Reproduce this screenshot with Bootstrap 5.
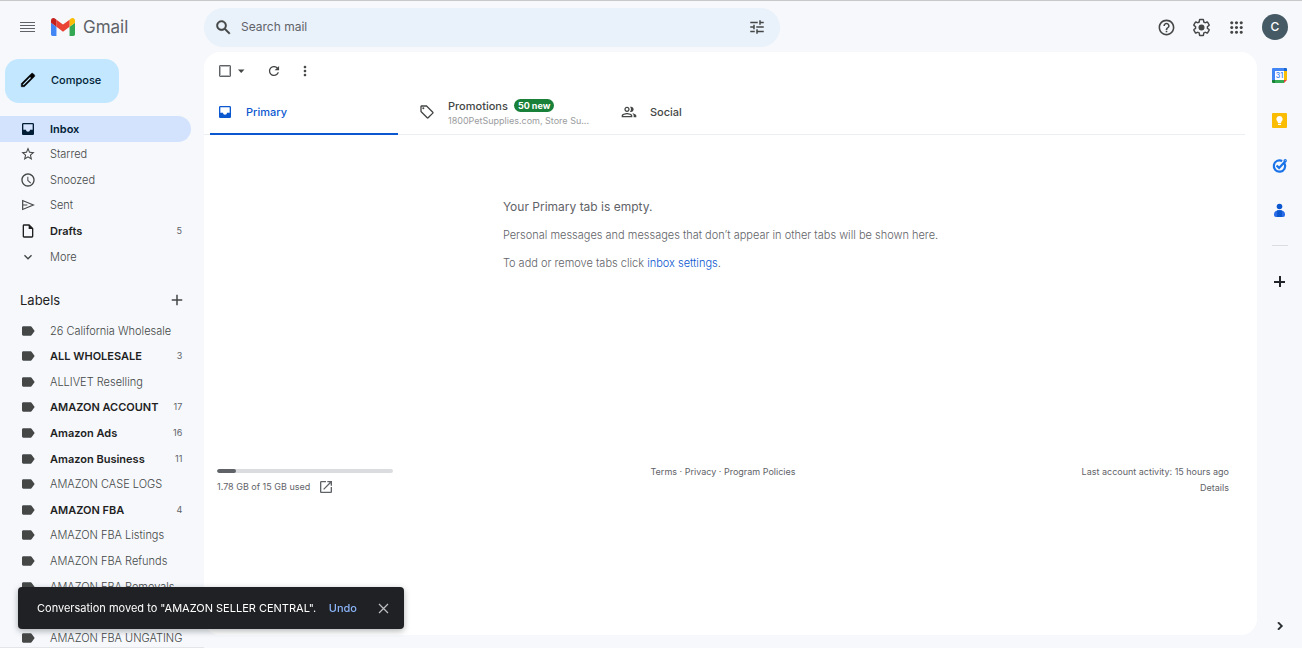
<!DOCTYPE html>
<html lang="en">
<head>
<meta charset="utf-8">
<meta name="viewport" content="width=device-width, initial-scale=1">
<title>Inbox - Gmail</title>
<link rel="stylesheet" href="https://cdn.jsdelivr.net/npm/bootstrap@5.3.0/dist/css/bootstrap.min.css">
<style>
  body { font-family: Inter, Roboto, sans-serif; font-size: 11px; line-height: 16px; color: #444746; background: #f6f8fc; border-top: 1px solid #c9c9c9; }
  a { text-decoration: none; color: inherit; }
  svg { display: block; flex: none; }
  svg:not([fill]) { fill: currentColor; }
  .icon-btn { padding: 0; border: 0; background: none; color: #444746; }
  .topbar { height: 53px; margin-bottom: -2px; }
  .brand-zone, .sidebar { width: 204px; flex: none; }
  .brand-name { font-size: 17px; line-height: 24px; color: #5f6368; }
  .search-box { flex: 0 1 576px; height: 39px; background: #e9f1fb; padding: 0 14px 0 10px; }
  .search-box input { font-size: 12px; line-height: 20px; background: none; border: 0; outline: 0; color: #444746; }
  .search-box input::placeholder { color: #5f6368; }
  .avatar { width: 26px; height: 26px; background: #455a64; color: #fff; font-size: 12px; font-weight: 500; }
  .account-tools { padding-right: 14px; }

  .sidebar { padding-top: 7px; border-bottom: 1px solid #e3e5e8; }
  .compose { height: 44px; margin-left: 5px; padding: 0 18px 2px 14px; gap: 14px; border: 0; border-radius: 14px; background: #c2e7ff; color: #001d35; font-weight: 500; font-size: 11px; }
  .compose svg { color: #000; }
  .folders { display: grid; grid-auto-rows: 26px 25px 26px 25px 26px; margin: 13px 13px 0 0; }
  .folders a { display: flex; align-items: center; height: 100%; padding: 0 9px 0 20px; border-radius: 0 13px 13px 0; font-weight: 300; white-space: nowrap; }
  .folders svg { margin-right: 14px; }
  .folders .count { margin-left: auto; font-size: 9px; font-weight: 400; color: #5f6368; }
  .folders .unread { font-weight: 600; color: #1f1f1f; }
  .folders .active { background: #d3e3fd; color: #001d35; font-weight: 600; }
  .labels-head { margin: 18px 18px 0 20px; }
  .labels-head h2 { font-size: 13px; line-height: 24px; font-weight: 400; color: #1f1f1f; margin: 0; }
  .label-list { margin-top: 6px; }

  .mail-pane { background: #fff; border-radius: 16px; margin-bottom: 13px; padding-right: 12px; }
  .toolbar-row { height: 38px; padding-left: 15px; }
  .select-all { appearance: none; width: 12px; height: 12px; border: 1px solid #5f6368; outline: 1px solid #b4b6b8; outline-offset: -2px; border-radius: 1px; margin: 0; }
  .inbox-tabs { height: 45px; border-bottom: 1px solid #eceff1; }
  .inbox-tabs .tab { position: relative; width: 202px; padding: 0 12px 0 13px; gap: 13px; font-weight: 500; line-height: 16px; color: #444746; }
  .inbox-tabs .tab.active { color: #0b57d0; }
  .inbox-tabs .tab.active::after { content: ""; position: absolute; left: 6px; right: 8px; bottom: -1px; height: 2px; background: #0b57d0; }
  .tab-text { padding-top: 2px; }
  .new-badge { background: #188038; color: #fff; font-size: 9px; line-height: 13px; font-weight: 700; border-radius: 7px; padding: 0 4px; margin-left: 6px; }
  .senders { font-size: 9px; line-height: 14px; font-weight: 400; color: #9a9c9e; }
  .empty-note { margin-top: 62px; color: #5f6368; font-weight: 300; }
  .empty-note p { margin: 0 0 12px; }
  .empty-note .lead-line { font-size: 12px; line-height: 20px; font-weight: 400; margin-bottom: 10px; }
  .empty-note a { color: #0b57d0; }
  .pane-foot { margin-top: 181px; font-size: 9px; color: #5f6368; }
  .storage { width: 176px; height: 4px; margin: 5px 0 6px; border-radius: 2px; background: #dadce0; }
  .storage .progress-bar { background: #5f6368; border-radius: 2px; }
  .storage-zone { padding-left: 13px; }

  .side-apps { width: 45px; flex: none; padding: 15px 0 14px; }
  .app-gap { margin-top: 28px; }
  .side-apps hr { width: 16px; margin: 26px 0 27px; border-color: #8d9188; }
  .toast-bar { position: fixed; left: 18px; bottom: 19px; width: 386px; height: 42px; padding: 0 14px 0 19px; background: #202124; color: #fff; border-radius: 4px; box-shadow: 0 2px 6px rgba(60, 64, 67, .4); }
  .toast-bar .undo { color: #8ab4f8; font-weight: 500; }
</style>
</head>
<body class="vh-100 overflow-hidden d-flex flex-column">

<svg width="0" height="0" class="position-absolute" aria-hidden="true">
  <symbol id="i-inbox" viewBox="0 0 24 24"><path d="M19 3H5c-1.1 0-2 .9-2 2v14c0 1.1.9 2 2 2h14c1.1 0 2-.9 2-2V5c0-1.1-.9-2-2-2zm0 10h-4c0 1.660-1.350 3-3 3s-3-1.340-3-3H5V5h14v8z"/></symbol>
  <symbol id="i-label" viewBox="0 0 24 24"><path d="M17.63 5.84C17.27 5.33 16.67 5 16 5L5 5.01C3.9 5.01 3 5.9 3 7v10c0 1.1.9 1.99 2 1.99L16 19c.67 0 1.27-.33 1.63-.84L22 12l-4.37-6.16z"/></symbol>
  <symbol id="i-plus" viewBox="0 0 24 24"><path d="M19 13h-6v6h-2v-6H5v-2h6V5h2v6h6v2z"/></symbol>
</svg>

<header class="topbar d-flex align-items-center">
  <div class="brand-zone d-flex align-items-center">
    <button class="icon-btn ms-3 px-1" aria-label="Main menu"><svg width="15" height="11" viewBox="0 0 15 11" shape-rendering="crispEdges" fill="#5f6368"><path d="M0 0h15v1H0zM0 3h15v1H0zM0 6h15v1H0zM0 9h15v1H0z"/></svg></button>
    <a href="#" class="d-flex align-items-center ms-2 ps-1">
      <svg class="me-2" width="24" height="18" viewBox="52 42 88 66"><path fill="#4285f4" d="M58 108h14V74L52 59v43c0 3.32 2.69 6 6 6"/><path fill="#34a853" d="M120 108h14c3.32 0 6-2.69 6-6V59l-20 15"/><path fill="#fbbc04" d="M120 48v26l20-15v-8c0-7.42-8.47-11.65-14.4-7.2"/><path fill="#ea4335" d="M72 74V48l24 18 24-18v26L96 92"/><path fill="#c5221f" d="M52 51v8l20 15V48l-5.6-4.2c-5.94-4.45-14.4-.22-14.4 7.2"/></svg>
      <span class="brand-name">Gmail</span>
    </a>
  </div>
  <form class="search-box d-flex align-items-center rounded-pill" role="search">
    <button type="button" class="icon-btn" aria-label="Search"><svg width="19" height="19" viewBox="0 0 24 24"><path d="M20.49 19l-5.73-5.73C15.53 12.2 16 10.91 16 9.5 16 5.91 13.09 3 9.5 3S3 5.91 3 9.5 5.91 16 9.5 16c1.41 0 2.7-.47 3.77-1.24L19 20.49 20.49 19zM5 9.5C5 7.01 7.01 5 9.5 5S14 7.01 14 9.5 11.99 14 9.5 14 5 11.99 5 9.5z" stroke="currentColor" stroke-width=".5"/></svg></button>
    <input type="search" class="flex-fill p-0 ps-1 ms-1" placeholder="Search mail" aria-label="Search mail">
    <button type="button" class="icon-btn" aria-label="Search options"><svg width="18" height="18" viewBox="0 0 24 24"><path d="M3 17v2h6v-2H3zM3 5v2h10V5H3zm10 16v-2h8v-2h-8v-2h-2v6h2zM7 9v2H3v2h4v2h2V9H7zm14 4v-2H11v2h10zm-6-4h2V7h4V5h-4V3h-2v6z"/></svg></button>
  </form>
  <div class="account-tools d-flex align-items-center ms-auto gap-3">
    <button class="icon-btn" aria-label="Support"><svg width="19" height="19" viewBox="0 0 24 24"><path d="M11 18h2v-2h-2v2zm1-16C6.48 2 2 6.48 2 12s4.48 10 10 10 10-4.48 10-10S17.52 2 12 2zm0 18c-4.41 0-8-3.59-8-8s3.59-8 8-8 8 3.59 8 8-3.59 8-8 8zm0-14c-2.21 0-4 1.79-4 4h2c0-1.1.9-2 2-2s2 .9 2 2c0 2-3 1.75-3 5h2c0-2.25 3-2.5 3-5 0-2.21-1.79-4-4-4z"/></svg></button>
    <button class="icon-btn" aria-label="Settings"><svg width="19" height="19" viewBox="0 0 24 24"><path fill="none" stroke="currentColor" stroke-width="1.8" d="M19.43 12.98c.04-.32.07-.64.07-.98s-.03-.66-.07-.98l2.11-1.65c.19-.15.24-.42.12-.64l-2-3.46c-.12-.22-.39-.3-.61-.22l-2.49 1c-.52-.4-1.08-.73-1.69-.98l-.38-2.65C14.46 2.18 14.25 2 14 2h-4c-.25 0-.46.18-.49.42l-.38 2.65c-.61.25-1.17.59-1.69.98l-2.49-1c-.23-.09-.49 0-.61.22l-2 3.46c-.13.22-.07.49.12.64l2.11 1.65c-.04.32-.07.65-.07.98s.03.66.07.98l-2.11 1.65c-.19.15-.24.42-.12.64l2 3.46c.12.22.39.3.61.22l2.49-1c.52.4 1.08.73 1.69.98l.38 2.65c.03.24.24.42.49.42h4c.25 0 .46-.18.49-.42l.38-2.65c.61-.25 1.17-.59 1.69-.98l2.49 1c.23.09.49 0 .61-.22l2-3.46c.12-.22.07-.49-.12-.64z"/><circle cx="12" cy="12" r="3.8"/></svg></button>
    <button class="icon-btn" aria-label="Google apps"><svg width="19" height="19" viewBox="0 0 24 24"><path d="M6 8c1.1 0 2-.9 2-2s-.9-2-2-2-2 .9-2 2 .9 2 2 2zm6 12c1.1 0 2-.9 2-2s-.9-2-2-2-2 .9-2 2 .9 2 2 2zm-6 0c1.1 0 2-.9 2-2s-.9-2-2-2-2 .9-2 2 .9 2 2 2zm0-6c1.1 0 2-.9 2-2s-.9-2-2-2-2 .9-2 2 .9 2 2 2zm6 0c1.1 0 2-.9 2-2s-.9-2-2-2-2 .9-2 2 .9 2 2 2zm4-8c0 1.1.9 2 2 2s2-.9 2-2-.9-2-2-2-2 .9-2 2zm-4 2c1.1 0 2-.9 2-2s-.9-2-2-2-2 .9-2 2 .9 2 2 2zm6 6c1.1 0 2-.9 2-2s-.9-2-2-2-2 .9-2 2 .9 2 2 2zm0 6c1.1 0 2-.9 2-2s-.9-2-2-2-2 .9-2 2 .9 2 2 2z"/></svg></button>
    <button class="avatar border-0 rounded-circle p-0 d-flex align-items-center justify-content-center" aria-label="Account">C</button>
  </div>
</header>

<div class="d-flex flex-fill overflow-hidden">
  <aside class="sidebar overflow-hidden">
    <button class="compose d-flex align-items-center"><svg width="18" height="18" viewBox="0 0 24 24"><path d="M20.41 4.94l-1.35-1.35c-.78-.78-2.05-.78-2.83 0L3 16.82V21h4.18L20.41 7.77c.79-.78.79-2.05 0-2.83zm-14 14.12L5 19v-1.36l9.82-9.82 1.41 1.41-9.82 9.83z" stroke="currentColor" stroke-width=".6"/></svg>Compose</button>

    <ul class="folders list-unstyled mb-0">
      <li><a href="#" class="active"><svg width="16" height="16"><use href="#i-inbox"/></svg>Inbox</a></li>
      <li><a href="#"><svg width="16" height="16" viewBox="0 0 24 24"><path d="M22 9.24l-7.19-.62L12 2 9.19 8.63 2 9.24l5.46 4.73L5.82 21 12 17.27 18.18 21l-1.63-7.03L22 9.24zM12 15.4l-3.76 2.27 1-4.28-3.32-2.88 4.38-.38L12 6.1l1.71 4.04 4.38.38-3.32 2.88 1 4.28L12 15.4z"/></svg>Starred</a></li>
      <li><a href="#"><svg width="16" height="16" viewBox="0 0 24 24"><path d="M11.99 2C6.47 2 2 6.48 2 12s4.47 10 9.99 10C17.52 22 22 17.52 22 12S17.52 2 11.99 2zM12 20c-4.42 0-8-3.58-8-8s3.58-8 8-8 8 3.58 8 8-3.58 8-8 8zM12.5 7H11v6l4.6 4.2 1.1-1.2-4.2-3.8z"/></svg>Snoozed</a></li>
      <li><a href="#"><svg width="16" height="16" viewBox="0 0 24 24" fill="none" stroke="currentColor" stroke-width="1.8"><path d="M4 5.3V18.7L20 12zM4 12h7"/></svg>Sent</a></li>
      <li><a href="#" class="unread"><svg width="16" height="16" viewBox="0 0 24 24"><path d="M14 2H6c-1.1 0-2 .9-2 2v16c0 1.1.9 2 2 2h12c1.1 0 2-.9 2-2V8l-6-6zM6 20V4h7v5h5v11H6z"/></svg>Drafts<span class="count">5</span></a></li>
      <li><a href="#"><svg width="16" height="16" viewBox="0 0 24 24"><path d="M7.41 8.59L12 13.17l4.59-4.58L18 10l-6 6-6-6 1.41-1.41z"/></svg>More</a></li>
    </ul>

    <div class="labels-head d-flex align-items-center justify-content-between">
      <h2>Labels</h2>
      <button class="icon-btn" aria-label="Create new label"><svg width="18" height="18"><use href="#i-plus"/></svg></button>
    </div>
    <ul class="folders label-list list-unstyled mb-0">
      <li><a href="#"><svg width="16" height="16"><use href="#i-label"/></svg>26 California Wholesale</a></li>
      <li><a href="#" class="unread"><svg width="16" height="16" color="#444746"><use href="#i-label"/></svg>ALL WHOLESALE<span class="count">3</span></a></li>
      <li><a href="#"><svg width="16" height="16"><use href="#i-label"/></svg>ALLIVET Reselling</a></li>
      <li><a href="#" class="unread"><svg width="16" height="16" color="#444746"><use href="#i-label"/></svg>AMAZON ACCOUNT<span class="count">17</span></a></li>
      <li><a href="#" class="unread"><svg width="16" height="16" color="#444746"><use href="#i-label"/></svg>Amazon Ads<span class="count">16</span></a></li>
      <li><a href="#" class="unread"><svg width="16" height="16" color="#444746"><use href="#i-label"/></svg>Amazon Business<span class="count">11</span></a></li>
      <li><a href="#"><svg width="16" height="16"><use href="#i-label"/></svg>AMAZON CASE LOGS</a></li>
      <li><a href="#" class="unread"><svg width="16" height="16" color="#444746"><use href="#i-label"/></svg>AMAZON FBA<span class="count">4</span></a></li>
      <li><a href="#"><svg width="16" height="16"><use href="#i-label"/></svg>AMAZON FBA Listings</a></li>
      <li><a href="#"><svg width="16" height="16"><use href="#i-label"/></svg>AMAZON FBA Refunds</a></li>
      <li><a href="#"><svg width="16" height="16"><use href="#i-label"/></svg>AMAZON FBA Removals</a></li>
      <li><a href="#" aria-label="Label"><svg width="16" height="16"><use href="#i-label"/></svg></a></li>
      <li><a href="#"><svg width="16" height="16"><use href="#i-label"/></svg>AMAZON FBA UNGATING</a></li>
    </ul>
  </aside>

  <main class="mail-pane flex-fill overflow-hidden">
    <div class="toolbar-row d-flex align-items-center">
      <input type="checkbox" class="select-all" aria-label="Select all">
      <button class="icon-btn ms-1" aria-label="Select options"><svg width="12" height="12" viewBox="0 0 12 12"><path d="M3 4.5h6.5L6.2 8z"/></svg></button>
      <button class="icon-btn ms-3 ps-1" aria-label="Refresh"><svg width="14" height="14" viewBox="1 1 22 22"><path d="M17.65 6.35C16.2 4.9 14.21 4 12 4c-4.42 0-7.99 3.58-7.99 8s3.57 8 7.99 8c3.73 0 6.84-2.55 7.73-6h-2.08c-.82 2.33-3.04 4-5.65 4-3.31 0-6-2.69-6-6s2.69-6 6-6c1.66 0 3.14.69 4.22 1.78L13 11h7V4l-2.35 2.35z"/></svg></button>
      <button class="icon-btn ms-3" aria-label="More"><svg width="16" height="16" viewBox="0 0 24 24"><path d="M12 8c1.1 0 2-.9 2-2s-.9-2-2-2-2 .9-2 2 .9 2 2 2zm0 2c-1.1 0-2 .9-2 2s.9 2 2 2 2-.9 2-2-.9-2-2-2zm0 6c-1.1 0-2 .9-2 2s.9 2 2 2 2-.9 2-2-.9-2-2-2z"/></svg></button>
    </div>

    <nav class="inbox-tabs d-flex" aria-label="Inbox categories">
      <a href="#" class="tab active d-flex align-items-center"><svg width="16" height="16"><use href="#i-inbox"/></svg>Primary</a>
      <a href="#" class="tab d-flex align-items-center"><svg width="16" height="16" viewBox="0 0 24 24"><path d="M21.41 11.58l-9-9C12.05 2.22 11.55 2 11 2H4c-1.1 0-2 .9-2 2v7c0 .55.22 1.05.59 1.42l9 9c.36.36.86.58 1.41.58s1.05-.22 1.41-.59l7-7c.37-.36.59-.86.59-1.41s-.23-1.06-.59-1.42zM13 20.01L4 11V4h7l9 9-7 7.01z"/><circle cx="6.5" cy="6.5" r="1.5"/></svg>
        <span class="tab-text text-nowrap overflow-hidden"><span class="d-flex align-items-center">Promotions<span class="new-badge">50 new</span></span><span class="senders d-block text-truncate">1800PetSupplies.com, Store Su...</span></span></a>
      <a href="#" class="tab d-flex align-items-center"><svg width="16" height="16" viewBox="0 0 24 24"><path d="M9 12c2.21 0 4-1.79 4-4s-1.79-4-4-4-4 1.79-4 4 1.79 4 4 4zm0-6c1.1 0 2 .9 2 2s-.9 2-2 2-2-.9-2-2 .9-2 2-2zm0 7.5c-2.67 0-8 1.34-8 4V20h16v-2.5c0-2.66-5.33-4-8-4zm6 4.500H3v-.5c.2-.7 3.3-2 6-2s5.8 1.3 6 2v.5zM15 12c2.21 0 4-1.79 4-4s-1.79-4-4-4c-.5 0-1 .1-1.5.3.9 1 1.5 2.3 1.5 3.7s-.6 2.7-1.5 3.7c.5.2 1 .3 1.5.3zm1.700 1.700c1.4.9 2.3 2.2 2.3 3.800V20h4v-2.500c0-2-3.1-3.3-6.3-3.800z"/></svg>Social</a>
    </nav>

    <div class="text-center">
      <div class="empty-note d-inline-block text-start me-2">
        <p class="lead-line">Your Primary tab is empty.</p>
        <p>Personal messages and messages that don’t appear in other tabs will be shown here.</p>
        <p>To add or remove tabs click <a href="#">inbox settings</a>.</p>
      </div>
    </div>

    <footer class="pane-foot row g-0">
      <div class="col storage-zone">
        <div class="progress storage" role="progressbar" aria-label="Storage used" aria-valuenow="11" aria-valuemin="0" aria-valuemax="100"><div class="progress-bar" style="width:11%"></div></div>
        <div class="d-flex align-items-center"><span>1.78 GB of 15 GB used</span><a href="#" class="ms-1 ps-1" aria-label="Manage storage"><svg width="16" height="16" viewBox="0 0 24 24"><path d="M19 19H5V5h7V3H5c-1.11 0-2 .9-2 2v14c0 1.1.89 2 2 2h14c1.1 0 2-.9 2-2v-7h-2v7zM14 3v2h3.59l-9.83 9.83 1.41 1.41L19 6.41V10h2V3h-7z"/></svg></a></div>
      </div>
      <div class="col text-center"><a href="#">Terms</a> · <a href="#">Privacy</a> · <a href="#">Program Policies</a></div>
      <div class="col text-end pe-3">Last account activity: 15 hours ago<br><a href="#">Details</a></div>
    </footer>
  </main>

  <aside class="side-apps d-flex flex-column align-items-center" aria-label="Side panel">
    <button class="icon-btn" aria-label="Calendar"><svg width="17" height="17" viewBox="0 0 17 17"><path fill="#fff" d="M3 3h11v11H3z"/><path fill="#4285f4" d="M1 2a1 1 0 0 1 1-1h12v3H4v9H1z"/><path fill="#1967d2" d="M13 1h2a1 1 0 0 1 1 1v2h-3z"/><path fill="#fbbc04" d="M13 4h3v9h-3z"/><path fill="#34a853" d="M4 13h9v3H4z"/><path fill="#188038" d="M1 13h3v3H2a1 1 0 0 1-1-1z"/><path fill="#ea4335" d="M13 13h3l-3 3z"/><text x="8.5" y="11" font-size="7" font-weight="600" text-anchor="middle" fill="#4285f4">31</text></svg></button>
    <button class="icon-btn app-gap" aria-label="Keep"><svg width="17" height="17" viewBox="0 0 17 17"><rect x="1" y="1" width="15" height="15" rx="1" fill="#fbbc04"/><path fill="#fff" d="M8.5 4a3.2 3.2 0 0 0-1.7 5.9V11h3.4V9.9A3.2 3.2 0 0 0 8.5 4zM7 11.7h3v1.2H7z"/></svg></button>
    <button class="icon-btn app-gap" aria-label="Tasks"><svg width="17" height="17" viewBox="0 0 17 17" fill="none" stroke="#1a73e8" stroke-width="2.2"><path d="M13.6 6.5A5.7 5.7 0 1 1 11.2 4M5.5 8.5l2.6 2.4L14.5 4"/><circle cx="14.2" cy="3.8" r=".6"/></svg></button>
    <button class="icon-btn app-gap" aria-label="Contacts"><svg width="17" height="17" viewBox="0 0 17 17"><circle cx="8.5" cy="4.5" r="2.8" fill="#0b57d0"/><path fill="#2a6be8" d="M3 12.200C3 9.8 5 8.2 8.5 8.2s5.5 1.6 5.5 4V13a2 2 0 0 1-2 2H5a2 2 0 0 1-2-2z"/><path fill="#0b57d0" d="M6 8.600c1.7-.5 3.3-.5 5 0V15H6z"/></svg></button>
    <hr>
    <button class="icon-btn text-dark" aria-label="Get add-ons"><svg width="17" height="17" viewBox="0 0 17 17"><path d="M8 3h2v5h4v2h-4v4H8v-4H3V8h5z"/></svg></button>
    <button class="icon-btn text-dark mt-auto" aria-label="Hide side panel"><svg width="16" height="16" viewBox="0 0 24 24"><path d="M10 6L8.59 7.41 13.17 12l-4.58 4.59L10 18l6-6z" stroke="currentColor"/></svg></button>
  </aside>
</div>

<div class="toast-bar d-flex align-items-center" role="status">
  <span class="text-nowrap">Conversation moved to "AMAZON SELLER CENTRAL".</span>
  <button class="icon-btn undo ms-auto me-3">Undo</button>
  <button class="icon-btn text-light ms-1" aria-label="Close"><svg width="13" height="13" viewBox="0 0 13 13" fill="none" stroke="#bdc1c6" stroke-width="1.2"><path d="M2 2l9 9M11 2l-9 9"/></svg></button>
</div>

<script src="https://cdn.jsdelivr.net/npm/bootstrap@5.3.0/dist/js/bootstrap.bundle.min.js"></script>
</body>
</html>
